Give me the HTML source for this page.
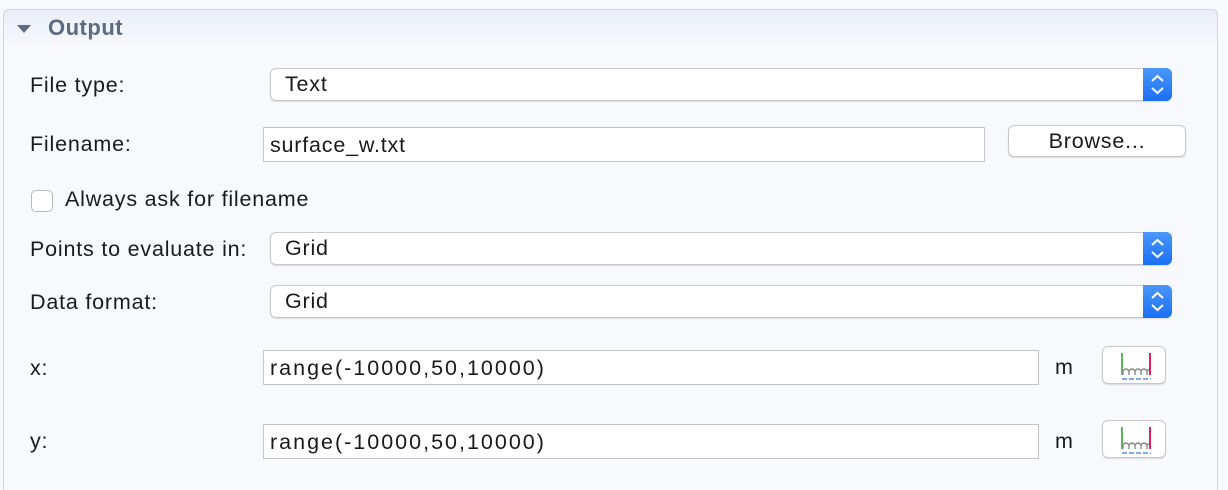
<!DOCTYPE html>
<html style="height:490px;overflow:hidden"><head><style>
body{margin:0;width:1228px;height:490px;background:#f8f9fd;font-family:"Liberation Sans",sans-serif;font-size:21.5px;letter-spacing:0.8px;color:#1a1a1a;position:relative;overflow:hidden}
.a{position:absolute}
.panel{left:3px;top:9px;width:1215px;height:481px;border:1px solid #cdd6e6;border-bottom:none;border-radius:6px 6px 0 0;background:#f8f9fd;box-sizing:border-box}
.hdr{left:4px;top:10px;width:1213px;height:36px;background:linear-gradient(#e9eef8,#f8f9fd);border-radius:6px 6px 0 0}
.lbl{left:30px;line-height:24px}
.sel{left:270px;width:902px;height:33px;background:#fff;border:1px solid #c8c8c8;border-radius:6px;box-sizing:border-box;box-shadow:0 1px 1px rgba(0,0,0,.12)}
.sel span{position:absolute;left:14px;top:3px}
.sel i{position:absolute;right:-1px;top:-1px;width:29px;height:33px;background:linear-gradient(#4c97fb,#1a6ff4);border-radius:0 6px 6px 0}
.inp{left:263px;height:35px;background:#fff;border:1px solid #c4c4c4;box-sizing:border-box}
.inp span{position:absolute;left:6px;top:5px}
.btn{background:#fff;border:1px solid #c8c8c8;border-radius:6px;box-sizing:border-box;box-shadow:0 1px 1px rgba(0,0,0,.12)}
.rg{letter-spacing:2px}
</style></head><body>
<div class="a panel"></div>
<div class="a hdr"></div>
<svg class="a" style="left:16px;top:24px" width="16" height="10"><path d="M1 1H15L8 9Z" fill="#5a6b80"/></svg>
<div class="a" style="left:48px;top:15px;font-weight:bold;color:#5b6b80;font-size:22px;letter-spacing:0.5px">Output</div>

<div class="a lbl" style="top:73px">File type:</div>
<div class="a sel" style="top:68px"><span>Text</span><i><svg width="29" height="33"><path d="M9 13L14.5 8L20 13M9 20L14.5 25L20 20" stroke="#fff" stroke-width="2" fill="none"/></svg></i></div>

<div class="a lbl" style="top:132px">Filename:</div>
<div class="a inp" style="top:127px;width:722px"><span>surface_w.txt</span></div>
<div class="a btn" style="left:1008px;top:125px;width:178px;height:32px;text-align:center;line-height:30px">Browse...</div>

<div class="a" style="left:31px;top:190px;width:22px;height:22px;background:#fff;border:1px solid #b8b8b8;border-radius:5px;box-sizing:border-box"></div>
<div class="a" style="left:65px;top:187px">Always ask for filename</div>

<div class="a lbl" style="top:237px">Points to evaluate in:</div>
<div class="a sel" style="top:232px"><span>Grid</span><i><svg width="29" height="33"><path d="M9 13L14.5 8L20 13M9 20L14.5 25L20 20" stroke="#fff" stroke-width="2" fill="none"/></svg></i></div>

<div class="a lbl" style="top:290px">Data format:</div>
<div class="a sel" style="top:285px"><span>Grid</span><i><svg width="29" height="33"><path d="M9 13L14.5 8L20 13M9 20L14.5 25L20 20" stroke="#fff" stroke-width="2" fill="none"/></svg></i></div>

<div class="a lbl" style="top:356px">x:</div>
<div class="a inp" style="top:350px;width:776px"><span class="rg">range(-10000,50,10000)</span></div>
<div class="a" style="left:1055px;top:355px">m</div>
<div class="a btn" style="left:1102px;top:346px;width:64px;height:38px"><svg width="64" height="38"><path d="M19 6V28" stroke="#5cb85c" stroke-width="2"/><path d="M47 6V28" stroke="#d6245e" stroke-width="2"/><path d="M20 28V24Q23 20 26 24V28M26 24Q29 20 32 24V28M32 24Q35 20 38 24V28M38 24Q41 20 44 24V28M44 24Q45 22 46 24" stroke="#888" stroke-width="1.4" fill="none"/><path d="M19 32H48" stroke="#5b8fd6" stroke-width="1.6" stroke-dasharray="5 2"/></svg></div>

<div class="a lbl" style="top:429px">y:</div>
<div class="a inp" style="top:424px;width:776px"><span class="rg">range(-10000,50,10000)</span></div>
<div class="a" style="left:1055px;top:429px">m</div>
<div class="a btn" style="left:1102px;top:420px;width:64px;height:38px"><svg width="64" height="38"><path d="M19 6V28" stroke="#5cb85c" stroke-width="2"/><path d="M47 6V28" stroke="#d6245e" stroke-width="2"/><path d="M20 28V24Q23 20 26 24V28M26 24Q29 20 32 24V28M32 24Q35 20 38 24V28M38 24Q41 20 44 24V28M44 24Q45 22 46 24" stroke="#888" stroke-width="1.4" fill="none"/><path d="M19 32H48" stroke="#5b8fd6" stroke-width="1.6" stroke-dasharray="5 2"/></svg></div>
</body></html>
